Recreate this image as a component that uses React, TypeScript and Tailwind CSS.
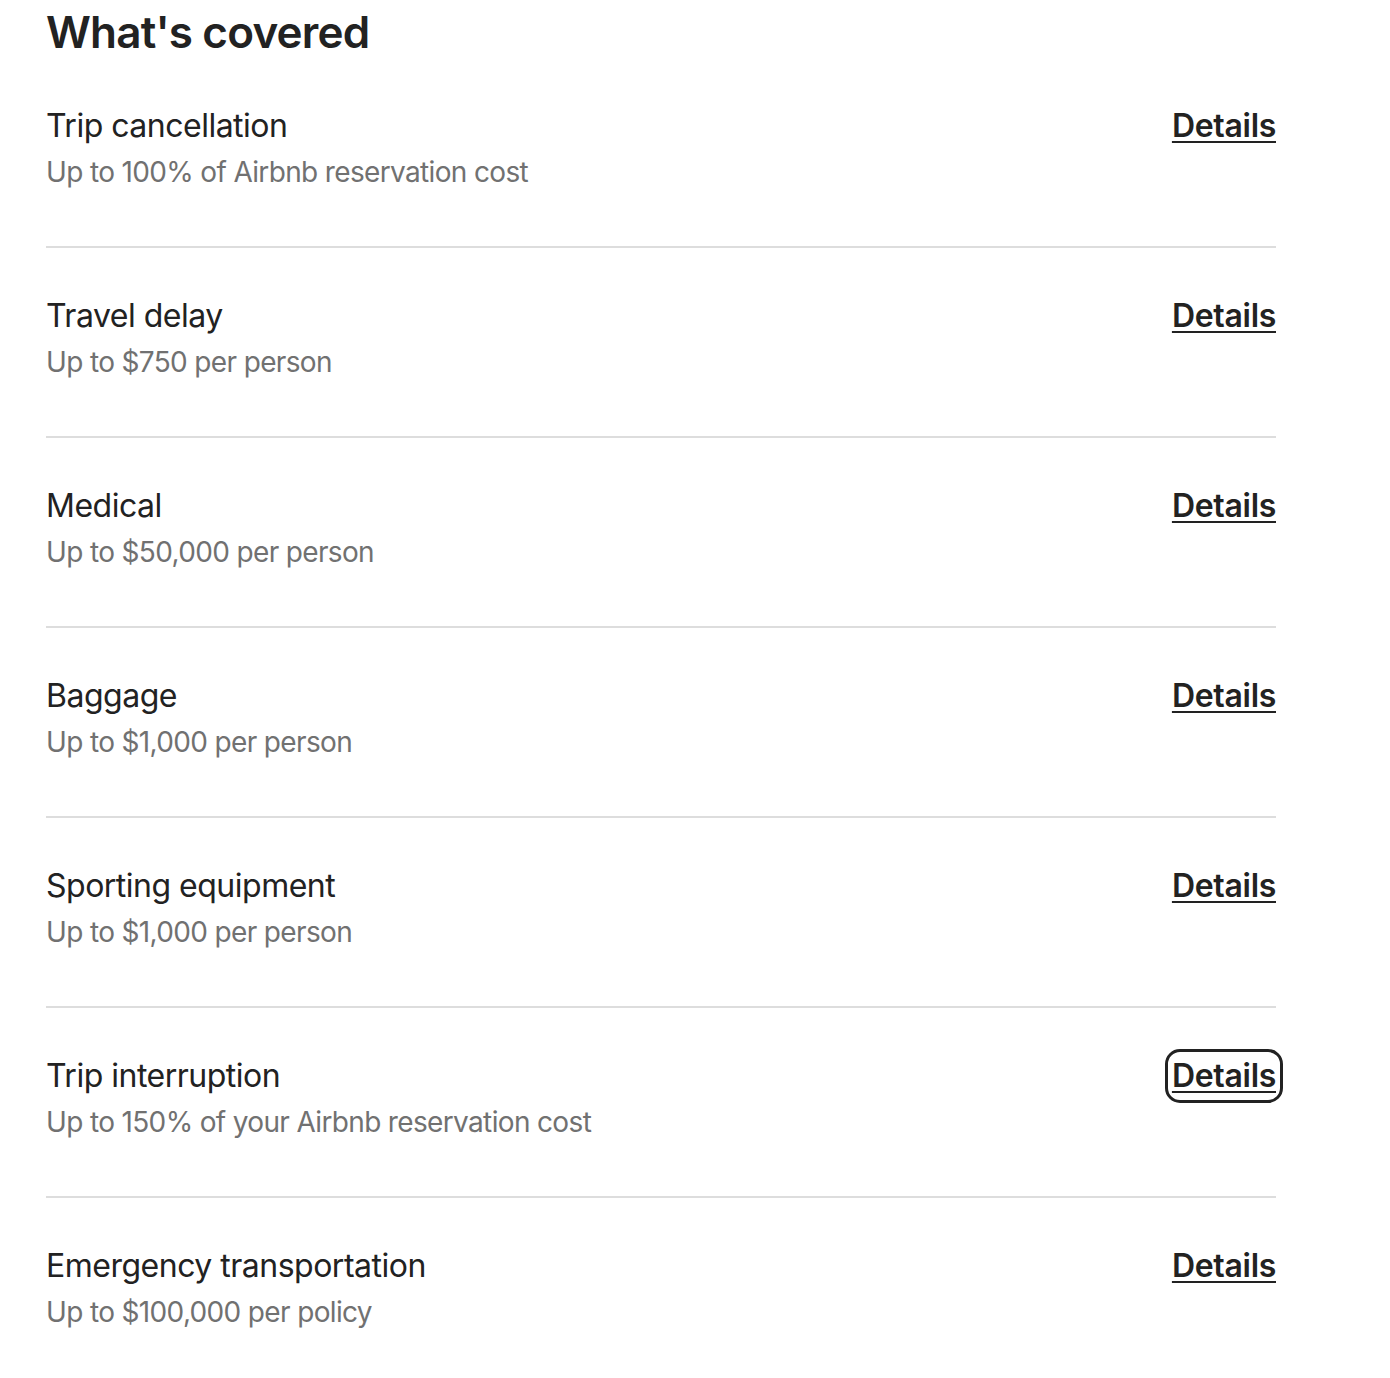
import React from "react";

const items = [
  { title: "Trip cancellation", sub: "Up to 100% of Airbnb reservation cost" },
  { title: "Travel delay", sub: "Up to $750 per person" },
  { title: "Medical", sub: "Up to $50,000 per person" },
  { title: "Baggage", sub: "Up to $1,000 per person" },
  { title: "Sporting equipment", sub: "Up to $1,000 per person" },
  { title: "Trip interruption", sub: "Up to 150% of your Airbnb reservation cost", focus: true },
  { title: "Emergency transportation", sub: "Up to $100,000 per policy" },
];

export default function App() {
  return (
    <div className="min-h-[1378px] bg-white text-[#222222]" style={{ fontFamily: "Inter, 'Noto Sans', sans-serif" }}>
      <div className="pl-[46px] w-[1276px]">
        <h1 className="pt-[6px] text-[44px] leading-[52px] font-semibold tracking-[-0.8px]">What's covered</h1>
        {items.map((it, i) => (
          <div
            key={it.title}
            className={`flex justify-between items-start pt-[48px] pb-[56px] ${i < items.length - 1 ? "border-b-2 border-[#dddddd]" : ""}`}
          >
            <div>
              <div className="text-[32px] leading-[40px] tracking-[-0.5px]">{it.title}</div>
              <div className="mt-[8px] text-[28px] leading-[36px] text-[#717171] tracking-[-0.65px]">{it.sub}</div>
            </div>
            <a
              href="#"
              className={`text-[32px] leading-[40px] font-semibold tracking-[-0.3px] underline decoration-2 underline-offset-4 ${it.focus ? "outline-[3px] outline-solid outline-[#222222] outline-offset-[4px] rounded-lg" : ""}`}
            >
              Details
            </a>
          </div>
        ))}
      </div>
    </div>
  );
}
